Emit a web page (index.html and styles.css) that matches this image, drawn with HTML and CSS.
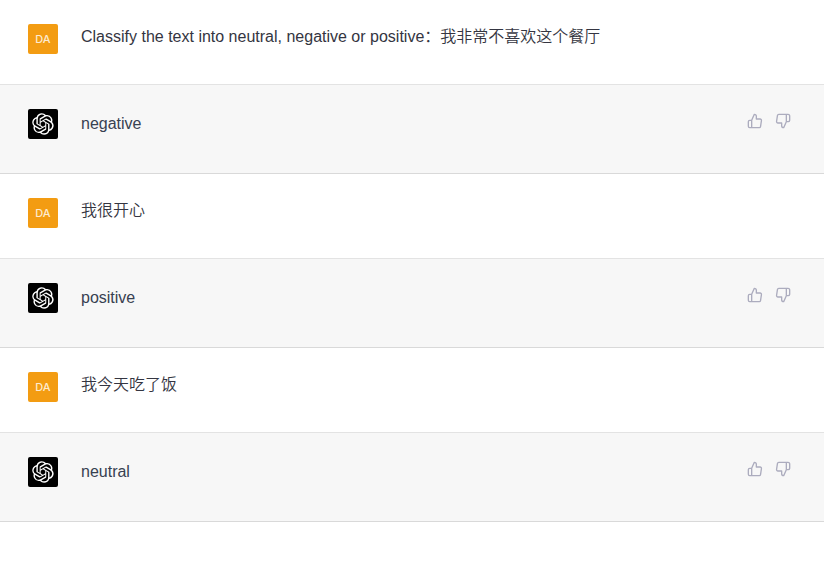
FILE: index.html
```html
<!DOCTYPE html>
<html lang="en">
<head>
<meta charset="utf-8">
<title>Chat</title>
<link rel="stylesheet" href="styles.css">
</head>
<body>
<svg class="defs" aria-hidden="true">
  <symbol id="logo" viewBox="0 0 41 41"><path fill="currentColor" d="M37.532 16.87a9.963 9.963 0 0 0-.856-8.184 10.078 10.078 0 0 0-10.855-4.835A9.964 9.964 0 0 0 18.306.5a10.079 10.079 0 0 0-9.614 6.977 9.967 9.967 0 0 0-6.664 4.834 10.08 10.08 0 0 0 1.24 11.817 9.965 9.965 0 0 0 .856 8.185 10.079 10.079 0 0 0 10.855 4.835 9.965 9.965 0 0 0 7.516 3.35 10.078 10.078 0 0 0 9.617-6.981 9.967 9.967 0 0 0 6.663-4.834 10.079 10.079 0 0 0-1.243-11.813ZM22.498 37.886a7.474 7.474 0 0 1-4.799-1.735c.061-.033.168-.091.237-.134l7.964-4.6a1.294 1.294 0 0 0 .655-1.134V19.054l3.366 1.944a.12.12 0 0 1 .066.092v9.299a7.505 7.505 0 0 1-7.49 7.496ZM6.392 31.006a7.471 7.471 0 0 1-.894-5.023c.06.036.162.099.237.141l7.964 4.6a1.297 1.297 0 0 0 1.308 0l9.724-5.614v3.888a.12.12 0 0 1-.048.103l-8.051 4.649a7.504 7.504 0 0 1-10.24-2.744ZM4.297 13.62A7.469 7.469 0 0 1 8.2 10.333c0 .068-.004.19-.004.274v9.201a1.294 1.294 0 0 0 .654 1.132l9.723 5.614-3.366 1.944a.12.12 0 0 1-.114.01L7.04 23.856a7.504 7.504 0 0 1-2.743-10.237Zm27.658 6.437-9.724-5.615 3.367-1.943a.121.121 0 0 1 .113-.01l8.052 4.648a7.498 7.498 0 0 1-1.158 13.528v-9.476a1.293 1.293 0 0 0-.65-1.132Zm3.35-5.043c-.059-.037-.162-.099-.236-.141l-7.965-4.6a1.298 1.298 0 0 0-1.308 0l-9.723 5.614v-3.888a.12.12 0 0 1 .048-.103l8.05-4.645a7.497 7.497 0 0 1 11.135 7.763Zm-21.063 6.929-3.367-1.944a.12.12 0 0 1-.065-.092v-9.299a7.497 7.497 0 0 1 12.293-5.756 6.94 6.94 0 0 0-.236.134l-7.965 4.6a1.294 1.294 0 0 0-.654 1.132l-.006 11.225Zm1.829-3.943 4.33-2.501 4.332 2.5v5l-4.331 2.5-4.331-2.5V18Z"/></symbol>
  <symbol id="up" viewBox="0 0 24 24"><path d="M14 9V5a3 3 0 0 0-3-3l-4 9v11h11.28a2 2 0 0 0 2-1.7l1.38-9a2 2 0 0 0-2-2.3zM7 22H4a2 2 0 0 1-2-2v-7a2 2 0 0 1 2-2h3"/></symbol>
  <symbol id="down" viewBox="0 0 24 24"><path d="M10 15v4a3 3 0 0 0 3 3l4-9V2H5.72a2 2 0 0 0-2 1.7l-1.38 9a2 2 0 0 0 2 2.3zm7-13h2.67A2.31 2.31 0 0 1 22 4v7a2.31 2.31 0 0 1-2.33 2H17"/></symbol>
</svg>
<main>
  <article class="turn user"><div class="avatar initials">DA</div><p class="text">Classify the text into neutral, negative or positive：我非常不喜欢这个餐厅</p></article>
  <article class="turn bot"><div class="avatar logo"><svg><use href="#logo"/></svg></div><p class="text">negative</p>
    <div class="actions"><button aria-label="Good response"><svg><use href="#up"/></svg></button><button aria-label="Bad response"><svg><use href="#down"/></svg></button></div></article>
  <article class="turn user"><div class="avatar initials">DA</div><p class="text">我很开心</p></article>
  <article class="turn bot"><div class="avatar logo"><svg><use href="#logo"/></svg></div><p class="text">positive</p>
    <div class="actions"><button aria-label="Good response"><svg><use href="#up"/></svg></button><button aria-label="Bad response"><svg><use href="#down"/></svg></button></div></article>
  <article class="turn user"><div class="avatar initials">DA</div><p class="text">我今天吃了饭</p></article>
  <article class="turn bot"><div class="avatar logo"><svg><use href="#logo"/></svg></div><p class="text">neutral</p>
    <div class="actions"><button aria-label="Good response"><svg><use href="#up"/></svg></button><button aria-label="Bad response"><svg><use href="#down"/></svg></button></div></article>
</main>
</body>
</html>
```
FILE: styles.css
```css
* { box-sizing: border-box; }
body {
  margin: 0;
  background: #fff;
  color: #343541;
  font: 350 16px/30px "Liberation Sans", "Noto Sans CJK SC", sans-serif;
}
.defs { display: none; }
.turn {
  display: flex;
  align-items: flex-start;
  gap: 23px;
  padding: 24px 29px 30px 28px;
  border-bottom: 1px solid #e3e3e3;
}
.user { line-height: 26px; }
.bot {
  padding-bottom: 34px;
  border-bottom-color: #d9d9d9;
  background: #f7f7f7;
  color: #374151;
}
.avatar {
  display: flex;
  flex: none;
  align-items: center;
  justify-content: center;
  width: 30px;
  height: 30px;
  border-radius: 2px;
}
.initials {
  background: #f39c12;
  color: #fdebd0;
  font: 500 11px Inter, sans-serif;
}
.logo { background: #000; color: #fff; }
.logo svg { width: 22px; height: 22px; }
.text { flex: 1; margin: 0; }
.actions { display: flex; gap: 4px; }
.actions button {
  display: flex;
  padding: 4px;
  border: 0;
  background: none;
  color: #acacbe;
}
.actions svg {
  width: 16px;
  height: 16px;
  fill: none;
  stroke: currentColor;
  stroke-width: 2;
  stroke-linecap: round;
  stroke-linejoin: round;
}
```
